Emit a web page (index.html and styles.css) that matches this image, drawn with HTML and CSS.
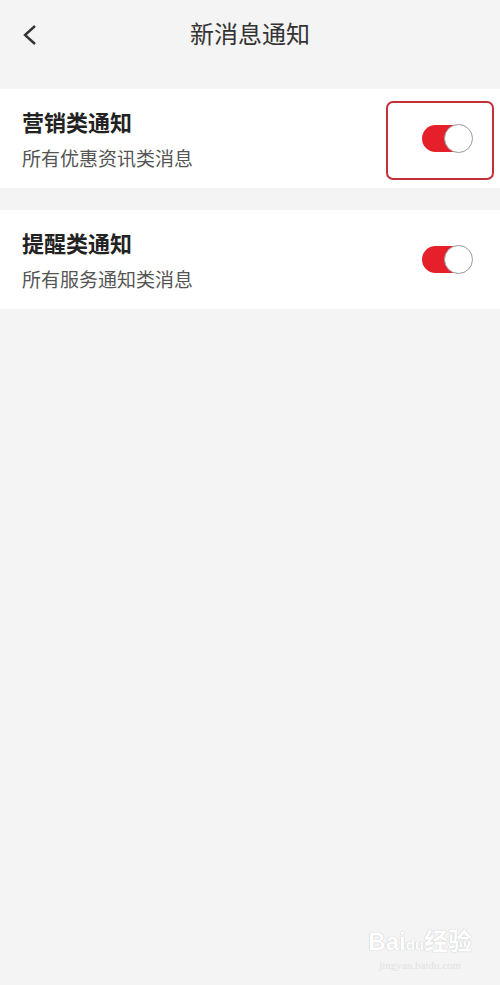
FILE: index.html
```html
<!DOCTYPE html>
<html>
<head>
<meta charset="utf-8">
<link rel="stylesheet" href="styles.css">
</head>
<body>

<div class="header">
  <span class="back">
    <svg width="16" height="22" viewBox="0 0 16 22"><path d="M13 2 L3 11 L13 20" fill="none" stroke="#333" stroke-width="2.4"/></svg>
  </span>
  <div class="title">新消息通知</div>
</div>

<div class="card">
  <div class="text">
    <div class="name">营销类通知</div>
    <div class="desc">所有优惠资讯类消息</div>
  </div>
  <div class="switch on"><span class="knob"></span></div>
  <div class="mark"></div>
</div>

<div class="card">
  <div class="text">
    <div class="name">提醒类通知</div>
    <div class="desc">所有服务通知类消息</div>
  </div>
  <div class="switch on"><span class="knob"></span></div>
</div>

<div class="watermark">
  <div class="wm-logo">Bai<span class="paw">du</span>经验</div>
  <div class="wm-url">jingyan.baidu.com</div>
</div>

</body>
</html>
```

FILE: styles.css
```css
body {
  margin: 0;
  background: #f4f4f4;
  font-family: "Noto Sans CJK SC", "Noto Sans", sans-serif;
  height: 985px;
  position: relative;
  overflow: hidden;
}

.header {
  height: 70px;
  display: flex;
  align-items: center;
  justify-content: center;
  position: relative;
  margin-bottom: 19px;
}

.back {
  position: absolute;
  left: 22px;
  top: 24px;
}

.title {
  font-size: 24px;
  color: #333;
  line-height: 30px;
  margin-top: -4px;
}

.card {
  background: #fff;
  display: flex;
  align-items: center;
  justify-content: space-between;
  padding: 17px 28px 17px 22px;
  margin-bottom: 22px;
  position: relative;
}

.name {
  font-size: 22px;
  line-height: 30px;
  font-weight: bold;
  color: #222;
}

.desc {
  margin-top: 9px;
  font-size: 19px;
  line-height: 26px;
  color: #555;
}

.switch {
  width: 50px;
  height: 27px;
  border-radius: 14px;
  background: #ddd;
  position: relative;
}

.switch.on {
  background: #e6202a;
}

.knob {
  position: absolute;
  right: -1px;
  top: -1px;
  width: 27px;
  height: 27px;
  border-radius: 50%;
  background: #fff;
  border: 1px solid #9a9a9a;
}

.mark {
  position: absolute;
  left: 386px;
  top: 12px;
  width: 104px;
  height: 75px;
  border: 2.5px solid #c62f3a;
  border-radius: 7px;
}

.watermark {
  position: absolute;
  right: 28px;
  bottom: 14px;
  text-align: center;
  color: #fff;
  text-shadow: 0 0 1px #c8c8c8, 0 0 1px #c8c8c8;
}

.wm-logo {
  font-family: "Liberation Sans", "Noto Sans CJK SC", sans-serif;
  font-size: 24px;
  font-weight: bold;
  line-height: 28px;
}

.paw {
  font-size: 15px;
}

.wm-url {
  font-family: "Liberation Serif", serif;
  font-size: 11px;
  color: #e2e2e2;
  text-shadow: none;
}
```
